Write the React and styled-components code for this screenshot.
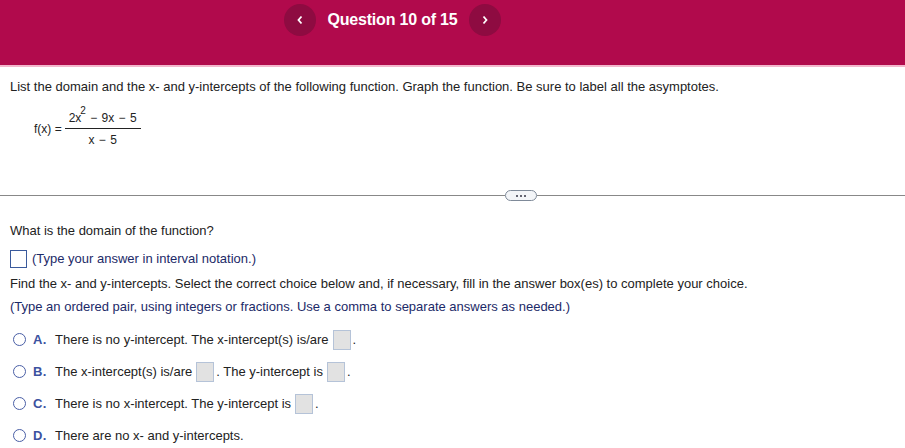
import React from "react";
import styled, { createGlobalStyle } from "styled-components";

const Global = createGlobalStyle`
  html, body {
    margin: 0;
    padding: 0;
    background: #fff;
  }
  body {
    font-family: "Liberation Sans", Arial, sans-serif;
    font-size: 13px;
    color: #222;
  }
`;

const Header = styled.header`
  height: 67px;
  background: #b10a4c;
  border-bottom: 2px solid #f3b7cc;
  display: flex;
  justify-content: center;
  align-items: flex-start;
  padding-top: 4px;
  box-sizing: border-box;
`;

const Nav = styled.div`
  display: flex;
  align-items: center;
  gap: 12px;
  margin-right: 120px;
`;

const NavButton = styled.button`
  width: 32px;
  height: 32px;
  border-radius: 50%;
  border: none;
  background: #8e0b41;
  color: #fff;
  display: flex;
  align-items: center;
  justify-content: center;
  padding: 0;
  cursor: pointer;
`;

const Title = styled.h1`
  margin: 0;
  font-size: 16px;
  font-weight: 700;
  color: #fff;
  letter-spacing: -0.2px;
`;

const Content = styled.main`
  padding: 12px 10px 0 10px;
`;

const Para = styled.p`
  margin: 0;
  line-height: 16px;
  color: ${(p) => (p.$hint ? "#1c2a68" : "#222")};
`;

const Formula = styled.div`
  display: flex;
  align-items: center;
  gap: 3px;
  margin: 16px 0 0 24px;
  font-size: 12px;
`;

const Fraction = styled.span`
  display: inline-flex;
  flex-direction: column;
  align-items: center;
`;

const Num = styled.span`
  padding: 0 4px 3px 4px;
  border-bottom: 1px solid #222;
  word-spacing: 1px;
  sup {
    font-size: 10px;
    line-height: 0;
    position: relative;
    top: -3px;
    margin-left: -1px;
  }
`;

const Den = styled.span`
  padding-top: 4px;
  word-spacing: 1px;
`;

const Divider = styled.div`
  display: flex;
  align-items: center;
  margin: 43px -10px 22px -10px;
  &::before,
  &::after {
    content: "";
    flex: 1;
    height: 1px;
    background: #888;
  }
  &::before {
    flex: 0 0 505px;
  }
`;

const Pill = styled.span`
  width: 30px;
  height: 9px;
  border: 1px solid #7f8a99;
  border-radius: 6px;
  background: #f3f5f8;
  display: flex;
  align-items: center;
  justify-content: center;
  gap: 2px;
  i {
    width: 2px;
    height: 2px;
    background: #334;
    border-radius: 1px;
  }
`;

const Row = styled.div`
  display: flex;
  align-items: center;
  gap: 5px;
  margin-top: ${(p) => p.$mt || 0}px;
`;

const InputBox = styled.span`
  display: inline-block;
  width: 15px;
  height: 16px;
  border: 1px solid #3a5a9c;
  background: #fff;
`;

const AnswerBox = styled.span`
  display: inline-block;
  width: 16px;
  height: 18px;
  border: 1px solid #b5c3d8;
  background: #e2e2e2;
  vertical-align: middle;
  margin: 0 2px 0 4px;
`;

const Choices = styled.div`
  display: flex;
  flex-direction: column;
  gap: 11px;
  margin-top: 14px;
  padding-left: 3px;
`;

const Choice = styled.label`
  display: flex;
  align-items: center;
  height: 21px;
`;

const Radio = styled.span`
  width: 11px;
  height: 11px;
  border: 1.3px solid #4a5fa6;
  border-radius: 50%;
  margin-right: 7px;
`;

const Letter = styled.span`
  width: 22px;
  color: #3c52a0;
  font-weight: 700;
  font-size: 13px;
  letter-spacing: 0.3px;
`;

const ChoiceText = styled.span`
  display: flex;
  align-items: center;
`;

const Chevron = ({ dir }) => (
  <svg width="8" height="10" viewBox="0 0 8 10">
    <path
      d={dir === "left" ? "M5.5 1.5 L2.5 5 L5.5 8.5" : "M2.5 1.5 L5.5 5 L2.5 8.5"}
      stroke="#fff"
      strokeWidth="1.8"
      fill="none"
    />
  </svg>
);

const choices = [
  {
    l: "A.",
    t: (
      <>
        There is no y-intercept. The x-intercept(s) is/are <AnswerBox />.
      </>
    ),
  },
  {
    l: "B.",
    t: (
      <>
        The x-intercept(s) is/are <AnswerBox />. The y-intercept is <AnswerBox />.
      </>
    ),
  },
  {
    l: "C.",
    t: (
      <>
        There is no x-intercept. The y-intercept is <AnswerBox />.
      </>
    ),
  },
  { l: "D.", t: <>There are no x- and y-intercepts.</> },
];

export default function App() {
  return (
    <>
      <Global />
      <Header>
        <Nav>
          <NavButton aria-label="previous">
            <Chevron dir="left" />
          </NavButton>
          <Title>Question 10 of 15</Title>
          <NavButton aria-label="next">
            <Chevron dir="right" />
          </NavButton>
        </Nav>
      </Header>
      <Content>
        <Para>
          List the domain and the x- and y-intercepts of the following function. Graph the
          function. Be sure to label all the asymptotes.
        </Para>
        <Formula>
          <span>f(x) =</span>
          <Fraction>
            <Num>
              2x<sup>2</sup> &minus; 9x &minus; 5
            </Num>
            <Den>x &minus; 5</Den>
          </Fraction>
        </Formula>
        <Divider>
          <Pill>
            <i />
            <i />
            <i />
          </Pill>
        </Divider>
        <Para>What is the domain of the function?</Para>
        <Row $mt={11}>
          <InputBox />
          <Para $hint>(Type your answer in interval notation.)</Para>
        </Row>
        <Para style={{ marginTop: 8 }}>
          Find the x- and y-intercepts. Select the correct choice below and, if necessary, fill
          in the answer box(es) to complete your choice.
        </Para>
        <Para $hint style={{ marginTop: 7 }}>
          (Type an ordered pair, using integers or fractions. Use a comma to separate answers as
          needed.)
        </Para>
        <Choices>
          {choices.map((c) => (
            <Choice key={c.l}>
              <Radio />
              <Letter>{c.l}</Letter>
              <ChoiceText>{c.t}</ChoiceText>
            </Choice>
          ))}
        </Choices>
      </Content>
    </>
  );
}
